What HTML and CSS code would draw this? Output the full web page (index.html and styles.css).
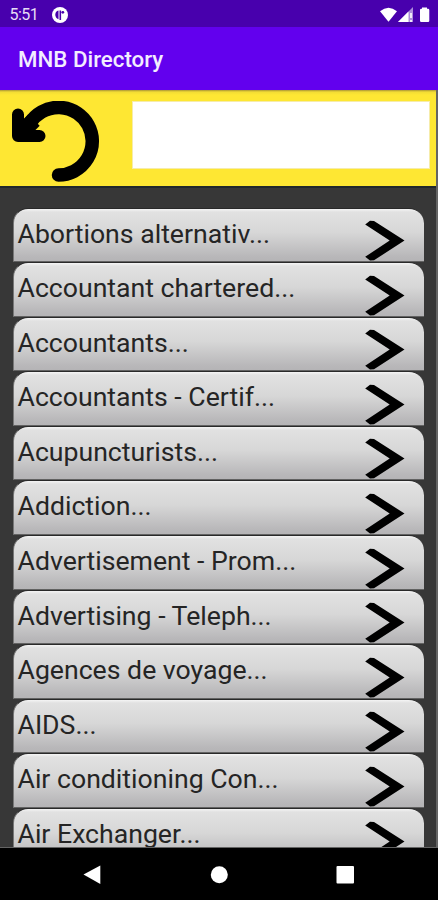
FILE: index.html
```html
<!DOCTYPE html>
<html lang="en">
<head>
<meta charset="utf-8">
<title>MNB Directory</title>
<link rel="stylesheet" href="styles.css">
</head>
<body>
<svg class="defs" width="0" height="0" aria-hidden="true">
  <symbol id="chevron" viewBox="0 0 40 41"><path d="M.2 4.500 5 .700 9 1 39.500 20.500 9 40.300 5 40.500.2 36.800 24.700 20.500Z"/></symbol>
</svg>
<div class="status">
  <span class="time">5:51</span>
  <svg class="app-icon" viewBox="0 0 16 16"><circle cx="8" cy="8" r="8" fill="#fff"/><path d="M6.500 3.400C2.200 4.100 2.200 10.800 6.500 12.200Z" fill="#4800ad"/><path d="M8.300 3.500v9.500" fill="none" stroke="#4800ad" stroke-width="1.600"/><circle cx="10.800" cy="5.300" r="1.400" fill="#4800ad"/></svg>
  <svg class="signals" viewBox="0 0 50 16"><path d="M0 4.200Q8.500-2.800 17 4.200L8.500 14.700Z" fill="#fff"/><path d="M18 15 33 0V15Z" fill="#fff" fill-opacity=".55"/><path d="M18 15 28.500 4.500V15Z" fill="#fff"/><path d="M31 6v5M31 13v2" stroke="#fff" stroke-width="1.600"/><path d="M40 3q0-1.300 1.300-1.300H42V.5h5v1.200h1q1.300 0 1.300 1.300v10.700q0 1.300-1.300 1.300h-6.700Q40 15 40 13.700Z" fill="#fff"/></svg>
</div>
<header class="title">MNB Directory</header>
<div class="content">
  <div class="search">
    <svg class="back" viewBox="0 0 90 84"><path d="M46.500 74A33.800 33.800 0 1 0 18 22" fill="none" stroke="#000" stroke-width="13.500" stroke-linecap="round"/><path d="M6 13.500V35H27.500" fill="none" stroke="#000" stroke-width="12" stroke-linecap="round" stroke-linejoin="round"/><path d="M8 33 22 19" stroke="#000" stroke-width="16"/></svg>
    <input class="field" type="text" aria-label="Search">
  </div>
  <div class="list">
    <div class="row"><span>Abortions alternativ...</span><svg><use href="#chevron"/></svg></div>
    <div class="row"><span>Accountant chartered...</span><svg><use href="#chevron"/></svg></div>
    <div class="row"><span>Accountants...</span><svg><use href="#chevron"/></svg></div>
    <div class="row"><span>Accountants - Certif...</span><svg><use href="#chevron"/></svg></div>
    <div class="row"><span>Acupuncturists...</span><svg><use href="#chevron"/></svg></div>
    <div class="row"><span>Addiction...</span><svg><use href="#chevron"/></svg></div>
    <div class="row"><span>Advertisement - Prom...</span><svg><use href="#chevron"/></svg></div>
    <div class="row"><span>Advertising - Teleph...</span><svg><use href="#chevron"/></svg></div>
    <div class="row"><span>Agences de voyage...</span><svg><use href="#chevron"/></svg></div>
    <div class="row"><span>AIDS...</span><svg><use href="#chevron"/></svg></div>
    <div class="row"><span>Air conditioning Con...</span><svg><use href="#chevron"/></svg></div>
    <div class="row"><span>Air Exchanger...</span><svg><use href="#chevron"/></svg></div>
  </div>
</div>
<nav class="nav">
  <svg viewBox="0 0 438 53"><path d="M83.500 26.500 100.300 17.500V36Z"/><circle cx="219.300" cy="26.700" r="8.500"/><rect x="336.500" y="18" width="17.500" height="17.500" rx="1"/></svg>
</nav>
</body>
</html>
```
FILE: styles.css
```css
* { box-sizing: border-box; }
body {
  margin: 0;
  width: 438px;
  height: 900px;
  overflow: hidden;
  display: flex;
  flex-direction: column;
  background: #000;
  font-family: Roboto, sans-serif;
}
.defs { display: none; }
.status {
  flex: 0 0 27px;
  display: flex;
  align-items: center;
  padding: 2px 8px 0 9.500px;
  background: #4800ad;
  color: #fff;
}
.time { width: 42px; font-size: 16px; line-height: 25px; letter-spacing: -.5px; color: #e6dcf5; }
.app-icon { width: 16px; height: 16px; }
.signals { width: 50px; height: 16px; margin-left: auto; }
.title {
  flex: 0 0 62px;
  padding: 1px 18px 0;
  background: #6200ee;
  color: #f3edff;
  font-size: 22.300px;
  font-weight: 500;
  line-height: 62px;
}
.content {
  flex: 0 0 758px;
  overflow: hidden;
  background: #373737;
  border-right: 2px solid #646464;
  border-bottom: 1px solid #646464;
}
.search {
  height: 98px;
  width: 438px;
  display: flex;
  align-items: flex-start;
  padding: 11px 8px 0 12px;
  background: linear-gradient(#a99535 0, #f2dc35 2px, #fee733 5px);
  border-bottom: 2px solid #20282b;
}
.back { width: 90px; height: 84px; }
.field {
  width: 298px;
  height: 68px;
  margin: 0 0 0 auto;
  padding: 0 8px;
  border: 1px solid #f6ecaa;
  background: #fff;
  font: 24px Roboto, sans-serif;
}
.list { padding: 19.500px 12px 0 12.500px; }
.row {
  height: 54.600px;
  display: flex;
  justify-content: space-between;
  padding: 0 19px 0 4px;
  border: solid;
  border-width: 1px 0 1px 1px;
  border-color: #292929 #777 #626262 #777;
  border-radius: 15px 15px 0 0;
  background: linear-gradient(#f5f5f5 0, #e1e1e1 3px, #d7d7d7 45%, #b8b7b9 92%, #b5b4b6);
  color: #252525;
}
.row span { font-size: 26.650px; line-height: 32px; padding-top: 9px; white-space: nowrap; }
.row svg { width: 40px; height: 41px; margin-top: 11.500px; }
.nav { flex: 0 0 53px; background: #000; }
.nav svg { display: block; width: 438px; height: 53px; fill: #fff; }
```
